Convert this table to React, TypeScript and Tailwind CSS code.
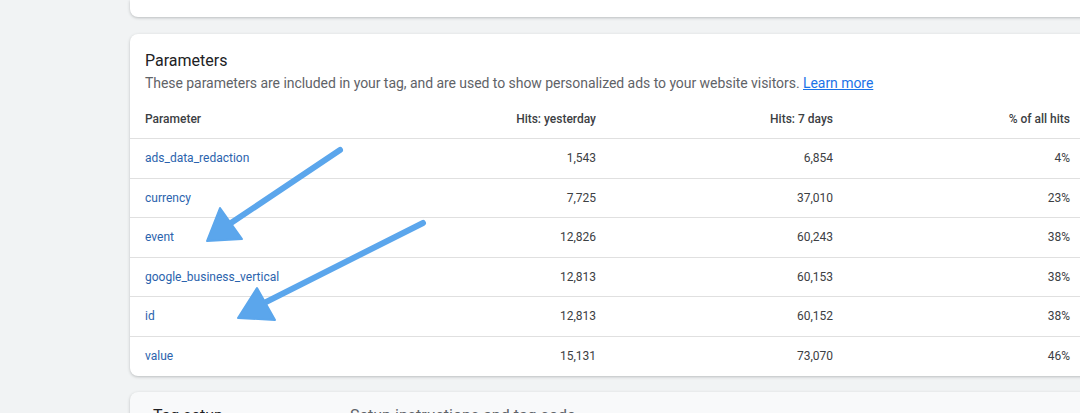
import React from "react";

const rows = [
  { name: "ads_data_redaction", y: "1,543", w: "6,854", p: "4%" },
  { name: "currency", y: "7,725", w: "37,010", p: "23%" },
  { name: "event", y: "12,826", w: "60,243", p: "38%" },
  { name: "google_business_vertical", y: "12,813", w: "60,153", p: "38%" },
  { name: "id", y: "12,813", w: "60,152", p: "38%" },
  { name: "value", y: "15,131", w: "73,070", p: "46%" },
];

export default function App() {
  return (
    <div
      className="relative w-[1080px] h-[413px] overflow-hidden bg-[#f1f3f4]"
      style={{ fontFamily: "Roboto, 'Liberation Sans', sans-serif" }}
    >
      <div className="flex">
        <div className="w-[130px] shrink-0" />
        <div className="flex flex-col w-[980px] shrink-0">
          <div className="h-[17px] bg-white rounded-b-lg shadow-[0_1px_3px_rgba(60,64,67,0.3)]" />
          <div className="mt-[17px] bg-white rounded-lg shadow-[0_1px_3px_rgba(60,64,67,0.3)]">
            <div className="pl-[15px] pt-[15px]">
              <div className="text-[16px] leading-[24px] text-[#202124]">Parameters</div>
              <div className="text-[14px] leading-[20px] tracking-[-0.05px] text-[#5f6368]">
                These parameters are included in your tag, and are used to show personalized ads to your website visitors.{" "}
                <span className="text-[#1a73e8] underline">Learn more</span>
              </div>
            </div>
            <div className="mt-[6px]">
              <div className="grid grid-cols-[200px_251px_237px_237px] pl-[15px] h-[40px] items-center border-b border-[#e0e0e0] text-[12px] font-medium text-[#3c4043]">
                <div>Parameter</div>
                <div className="text-right">Hits: yesterday</div>
                <div className="text-right">Hits: 7 days</div>
                <div className="text-right">% of all hits</div>
              </div>
              {rows.map((r, i) => (
                <div
                  key={r.name}
                  className={`grid grid-cols-[200px_251px_237px_237px] pl-[15px] h-[39.5px] items-center text-[12px] text-[#3c4043] ${
                    i < rows.length - 1 ? "border-b border-[#e0e0e0]" : ""
                  }`}
                >
                  <div className="text-[#2b63ad]">{r.name}</div>
                  <div className="text-right">{r.y}</div>
                  <div className="text-right">{r.w}</div>
                  <div className="text-right">{r.p}</div>
                </div>
              ))}
            </div>
          </div>
          <div className="mt-[16px] h-[60px] bg-[#f8f9fa] rounded-t-lg shadow-[0_1px_3px_rgba(60,64,67,0.3)] flex items-start pt-[12px]">
            <div className="pl-[23px] w-[220px] text-[16px] leading-[24px] text-[#202124]">Tag setup</div>
            <div className="text-[16px] leading-[24px] text-[#5f6368]">Setup instructions and tag code</div>
            <div className="ml-auto mr-[55px] mt-[4px]">
              <svg width="18" height="18" viewBox="0 0 24 24" fill="none" stroke="#5f6368" strokeWidth="2">
                <path d="M6 9l6 6 6-6" />
              </svg>
            </div>
          </div>
        </div>
      </div>
      <svg className="absolute inset-0 pointer-events-none" width="1080" height="413" viewBox="0 0 1080 413">
        <g fill="#5ba6ec" stroke="#5ba6ec" strokeLinejoin="round">
          <line x1="340" y1="150" x2="225" y2="227" strokeWidth="6" strokeLinecap="round" />
          <polygon points="207,241 220,208 242,239" strokeWidth="2" />
          <line x1="423" y1="223" x2="254" y2="308" strokeWidth="6" strokeLinecap="round" />
          <polygon points="238,318 257,288 275,320" strokeWidth="2" />
        </g>
      </svg>
    </div>
  );
}
